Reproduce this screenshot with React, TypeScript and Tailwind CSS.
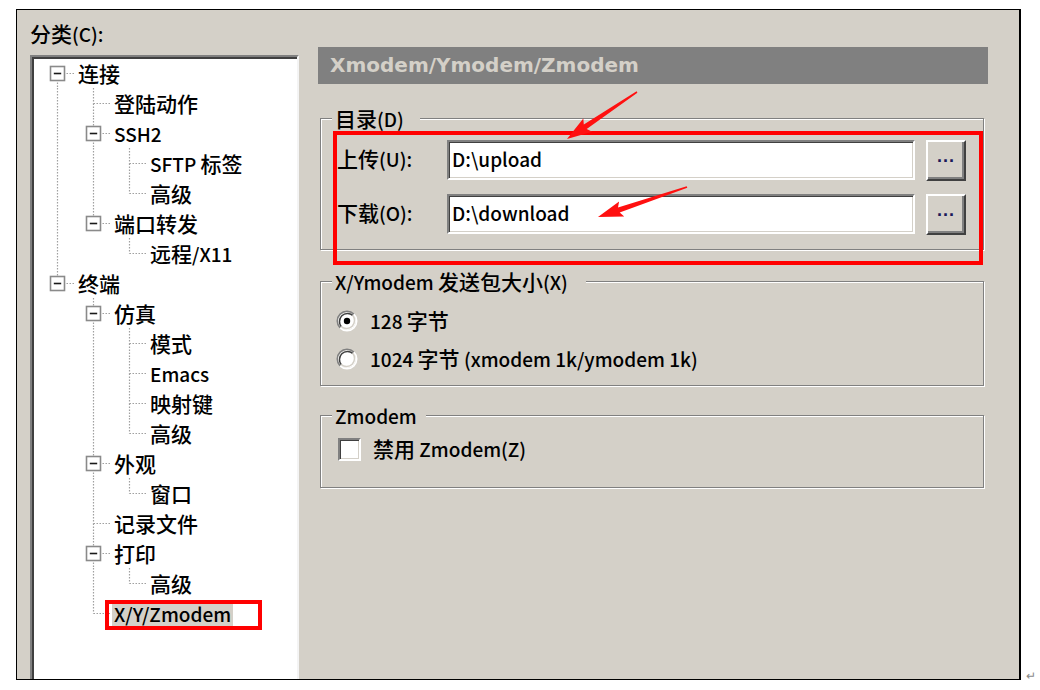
import React from "react";

type TreeNode = { label: string; children?: TreeNode[]; selected?: boolean };

type Row = {
  label: string;
  guides: boolean[];
  top: boolean;
  bottom: boolean;
  box: boolean;
  selected: boolean;
};

const tree: TreeNode[] = [
  {
    label: "连接",
    children: [
      { label: "登陆动作" },
      { label: "SSH2", children: [{ label: "SFTP 标签" }, { label: "高级" }] },
      { label: "端口转发", children: [{ label: "远程/X11" }] },
    ],
  },
  {
    label: "终端",
    children: [
      {
        label: "仿真",
        children: [{ label: "模式" }, { label: "Emacs" }, { label: "映射键" }, { label: "高级" }],
      },
      { label: "外观", children: [{ label: "窗口" }] },
      { label: "记录文件" },
      { label: "打印", children: [{ label: "高级" }] },
      { label: "X/Y/Zmodem", selected: true },
    ],
  },
];

function flatten(nodes: TreeNode[], guides: boolean[], root: boolean, out: Row[]) {
  nodes.forEach((n, i) => {
    const last = i === nodes.length - 1;
    out.push({
      label: n.label,
      guides,
      top: !(root && i === 0),
      bottom: !last,
      box: !!n.children,
      selected: !!n.selected,
    });
    if (n.children) flatten(n.children, [...guides, !last], false, out);
  });
  return out;
}

const rows = flatten(tree, [], true, []);

// latin runs are set a little smaller than the CJK ones, like the Tahoma/SimSun mix
function T({ s }: { s: string }) {
  const parts = s.split(/([\u2e80-\u9fff\uff00-\uffef]+)/);
  return (
    <>
      {parts.map((p, i) =>
        p === "" ? null : i % 2 === 1 ? (
          <span key={i}>{p}</span>
        ) : (
          <span key={i} className="text-[19px]">
            {p}
          </span>
        ),
      )}
    </>
  );
}

const dot = { stroke: "#a0a0a0", strokeWidth: 1.2, strokeDasharray: "1.5 1.5" };

function GuideCell({ line }: { line: boolean }) {
  return (
    <svg width="36" height="30" className="shrink-0">
      {line && <line x1="18.5" y1="0" x2="18.5" y2="30" {...dot} />}
    </svg>
  );
}

function NodeCell({ row }: { row: Row }) {
  return (
    <svg width="36" height="30" className="shrink-0">
      {row.top && <line x1="18.5" y1="0" x2="18.5" y2="15.5" {...dot} />}
      {row.bottom && <line x1="18.5" y1="15.5" x2="18.5" y2="30" {...dot} />}
      <line x1="18.5" y1="15.5" x2="35" y2="15.5" {...dot} />
      {row.box && (
        <g>
          <rect x="11.5" y="8.5" width="14" height="14" fill="#fff" stroke="#8a8a8a" strokeWidth="1.6" />
          <line x1="14.8" y1="15.5" x2="22.2" y2="15.5" stroke="#1a1a1a" strokeWidth="1.6" />
        </g>
      )}
    </svg>
  );
}

function Radio({ checked }: { checked?: boolean }) {
  return (
    <svg width="22" height="22" viewBox="0 0 22 22" className="shrink-0">
      <circle cx="11" cy="11" r="9" fill="#fff" />
      <path d="M4.1 17.9 A9.75 9.75 0 0 1 17.9 4.1" stroke="#808080" strokeWidth="1.5" fill="none" />
      <path d="M4.1 17.9 A9.75 9.75 0 0 0 17.9 4.1" stroke="#ffffff" strokeWidth="1.5" fill="none" />
      <path d="M5.3 16.7 A8.1 8.1 0 0 1 16.7 5.3" stroke="#404040" strokeWidth="1.5" fill="none" />
      <path d="M5.3 16.7 A8.1 8.1 0 0 0 16.7 5.3" stroke="#d4d0c8" strokeWidth="1.5" fill="none" />
      {checked && <circle cx="11" cy="11" r="3.2" fill="#000" />}
    </svg>
  );
}

function arrow(x1: number, y1: number, x2: number, y2: number) {
  const dx = x2 - x1;
  const dy = y2 - y1;
  const len = Math.hypot(dx, dy);
  const ux = dx / len;
  const uy = dy / len;
  const nx = -uy;
  const ny = ux;
  const head = 22;
  const hw = 8;
  const sw = 2.6;
  const tw = 0.8;
  const bx = x2 - ux * head;
  const by = y2 - uy * head;
  const p = (x: number, y: number) => `${x.toFixed(1)},${y.toFixed(1)}`;
  return [
    p(x1 + nx * tw, y1 + ny * tw),
    p(bx + nx * sw, by + ny * sw),
    p(bx - ux * 3 + nx * hw, by - uy * 3 + ny * hw),
    p(x2, y2),
    p(bx - ux * 3 - nx * hw, by - uy * 3 - ny * hw),
    p(bx - nx * sw, by - ny * sw),
    p(x1 - nx * tw, y1 - ny * tw),
  ].join(" ");
}

const sunken =
  "border-2 border-t-[#808080] border-l-[#808080] border-r-white border-b-white shadow-[inset_1px_1px_0_#404040,inset_-1px_-1px_0_#d4d0c8]";
const raised =
  "border-2 border-t-white border-l-white border-r-[#404040] border-b-[#404040] shadow-[inset_-2px_-2px_0_#808080]";
const etched = "relative border border-[#808080] shadow-[inset_1px_1px_0_#fff,1px_1px_0_#fff]";

function PathRow({ label, value }: { label: string; value: string }) {
  return (
    <div className="flex h-[40px] items-center">
      <span className="-mt-[3px] w-[126px] shrink-0 pl-[16px]">
        <T s={label} />
      </span>
      <div className={`flex h-[40px] w-[468px] items-center bg-white pl-[3px] ${sunken}`}>
        <span className="-mt-[3px]">
          <T s={value} />
        </span>
      </div>
      <button
        className={`ml-[11px] flex h-[41px] w-[40px] items-center justify-center bg-[#d4d0c8] pb-[8px] font-['Liberation_Sans',sans-serif] text-[18px] font-bold tracking-[1px] text-[#1a1a5a] ${raised}`}
      >
        ...
      </button>
    </div>
  );
}

export default function App() {
  return (
    <div className="relative flex h-[690px] w-[1040px] overflow-hidden bg-white font-['Noto_Sans_CJK_SC','Liberation_Sans',sans-serif] text-[21px] font-medium text-black">
      <div className="ml-[16px] mt-[9px] flex h-[671px] w-[1005px] border border-r-2 border-black bg-[#d4d0c8]">
        {/* category tree */}
        <div className="flex w-[282px] shrink-0 flex-col pl-[13px] pt-[8px]">
          <div className="h-[30px] leading-[30px]">
            <T s="分类(C):" />
          </div>
          <div className="mt-[7px] flex-1 border-2 border-b-0 border-t-[#808080] border-l-[#808080] border-r-[#f4f4f4] bg-white pl-[7px] pt-[1px] shadow-[inset_2px_2px_0_#404040]">
            {rows.map((r, i) => (
              <div key={i} className="flex h-[30px] items-center">
                {r.guides.map((g, j) => (
                  <GuideCell key={j} line={g} />
                ))}
                <NodeCell row={r} />
                <span
                  className={`ml-px whitespace-nowrap px-[2px] leading-[24px] ${r.selected ? "bg-[#d4d0c8]" : ""}`}
                >
                  <T s={r.label} />
                </span>
              </div>
            ))}
          </div>
        </div>

        {/* settings page */}
        <div className="ml-[19px] flex w-[670px] flex-col pt-[37px]">
          <div className="h-[37px] bg-[#808080] pl-[12px] font-['DejaVu_Sans',sans-serif] text-[20px] font-bold leading-[37px] text-[#d4d0c8]">
            Xmodem/Ymodem/Zmodem
          </div>

          <div className={`ml-[2px] mt-[34px] flex h-[132px] w-[664px] flex-col gap-[14px] pt-[21px] ${etched}`}>
            <span className="absolute -top-[13px] left-[11px] bg-[#d4d0c8] pl-[3px] pr-[16px] leading-[24px]">
              <T s="目录(D)" />
            </span>
            <PathRow label="上传(U):" value="D:\upload" />
            <PathRow label="下载(O):" value="D:\download" />
          </div>

          <div className={`ml-[2px] mt-[31px] flex h-[105px] w-[664px] flex-col gap-[8px] pl-[15px] pt-[24px] ${etched}`}>
            <span className="absolute -top-[13px] left-[11px] bg-[#d4d0c8] pl-[3px] pr-[18px] leading-[24px]">
              <T s="X/Ymodem 发送包大小(X)" />
            </span>
            <div className="flex h-[30px] items-center gap-[12px]">
              <Radio checked />
              <span>
                <T s="128 字节" />
              </span>
            </div>
            <div className="flex h-[30px] items-center gap-[12px]">
              <Radio />
              <span>
                <T s="1024 字节  (xmodem 1k/ymodem 1k)" />
              </span>
            </div>
          </div>

          <div className={`ml-[2px] mt-[29px] flex h-[73px] w-[664px] flex-col pl-[17px] pt-[18px] ${etched}`}>
            <span className="absolute -top-[13px] left-[11px] bg-[#d4d0c8] pl-[3px] pr-[9px] leading-[24px]">
              <T s="Zmodem" />
            </span>
            <div className="flex h-[30px] items-center gap-[12px]">
              <div className={`h-[23px] w-[23px] shrink-0 bg-white ${sunken}`} />
              <span>
                <T s="禁用 Zmodem(Z)" />
              </span>
            </div>
          </div>
        </div>
      </div>
      <span className="mb-[6px] ml-[5px] self-end text-[12px] text-[#8a8a8a]">↵</span>

      {/* annotations */}
      <div className="absolute left-[333px] top-[131px] h-[134px] w-[650px] border-[4px] border-[#ff0000]" />
      <div className="absolute left-[105px] top-[600px] h-[30px] w-[157px] border-[4px] border-[#ff0000]" />
      <svg className="pointer-events-none absolute left-0 top-0" width="1040" height="690">
        <polygon points={arrow(637, 92, 567, 139)} fill="#ff1010" />
        <polygon points={arrow(687, 187, 598, 217)} fill="#ff1010" />
      </svg>
    </div>
  );
}
